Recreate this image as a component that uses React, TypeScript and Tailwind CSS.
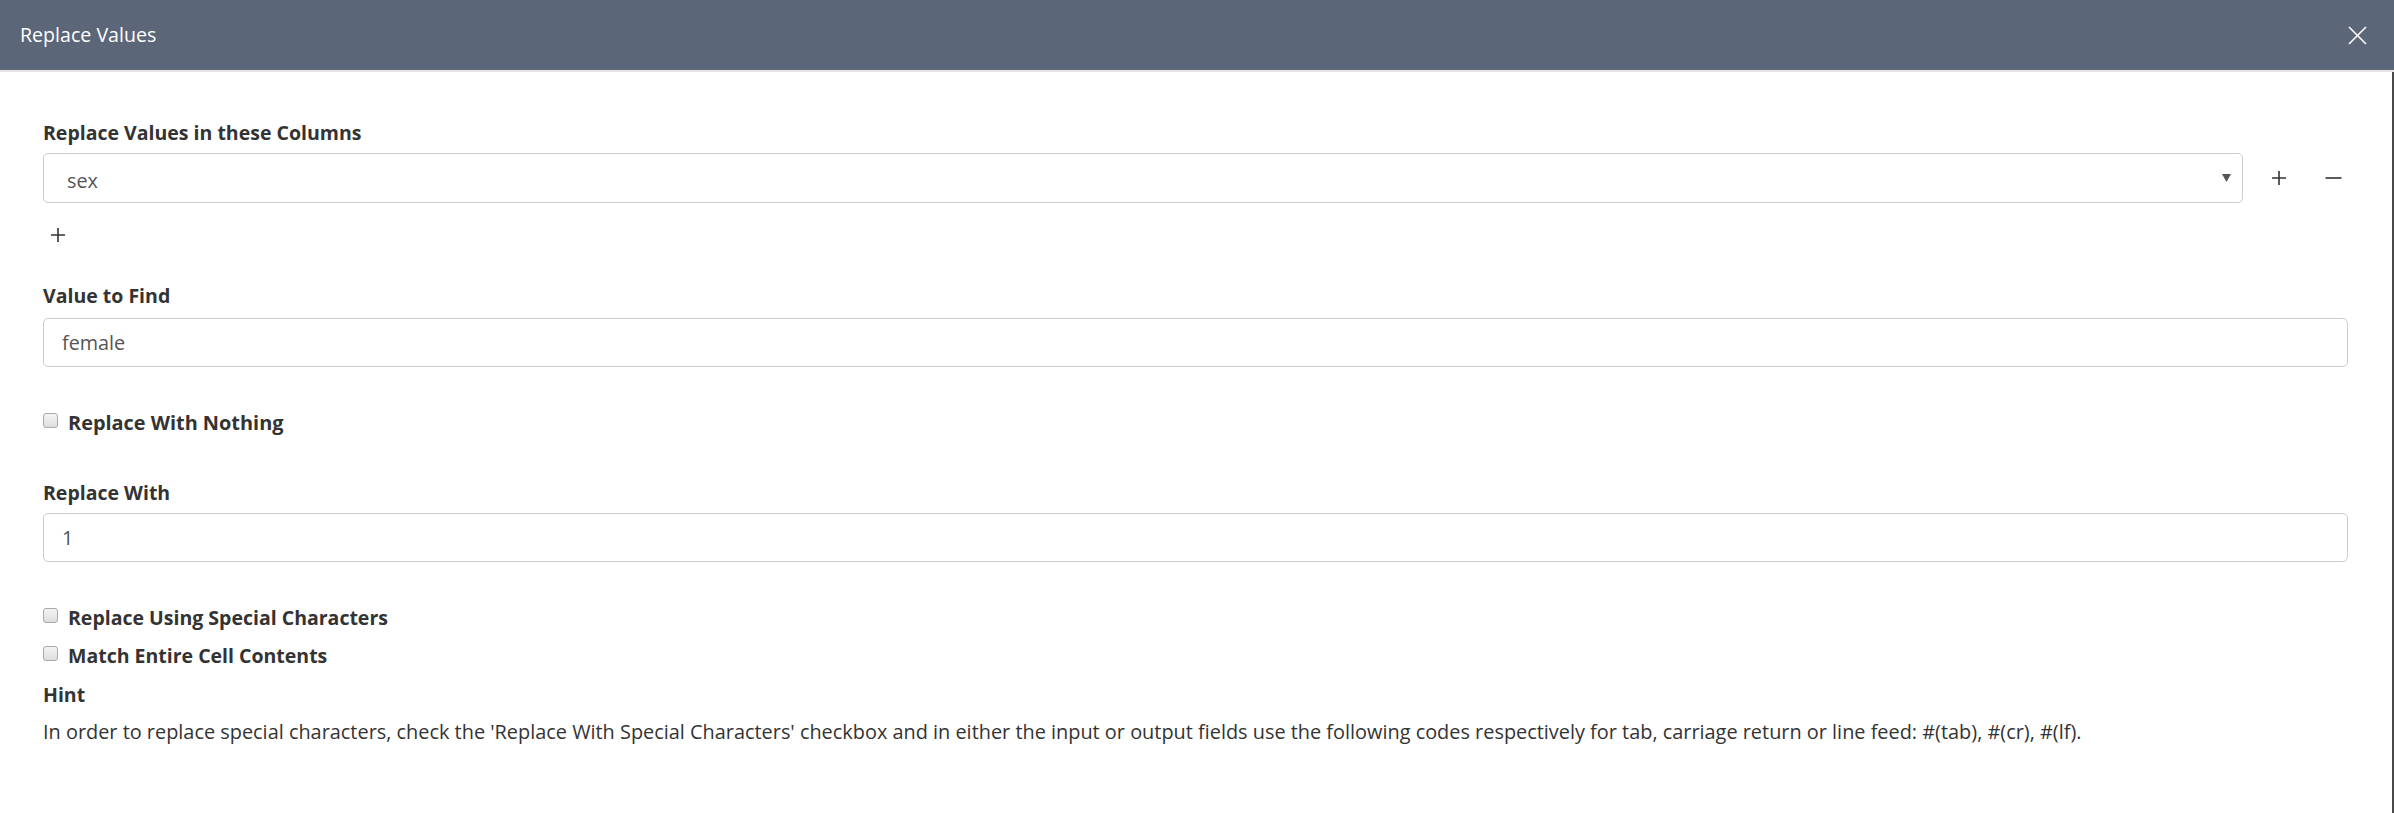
import React from "react";

const font = { fontFamily: '"Open Sans", "Noto Sans", sans-serif' };

function Checkbox() {
  return (
    <span className="mt-[5px] inline-block h-[15px] w-[15px] shrink-0 rounded-[3px] border border-[#a9a9a9] bg-gradient-to-b from-[#f4f4f4] to-[#dedede]" />
  );
}

function PlusIcon() {
  return (
    <svg width="16" height="16" viewBox="0 0 16 16" className="text-[#333]">
      <path d="M8 1v14M1 8h14" stroke="currentColor" strokeWidth="1.6" />
    </svg>
  );
}

function MinusIcon() {
  return (
    <svg width="17" height="16" viewBox="0 0 17 16" className="text-[#333]">
      <path d="M0.5 8h16" stroke="currentColor" strokeWidth="1.6" />
    </svg>
  );
}

export default function App() {
  return (
    <div className="flex h-[813px] w-full flex-col bg-white text-[#333]" style={font}>
      <div className="flex h-[70px] shrink-0 items-center justify-between bg-[#5b6778] pl-[20px] pr-[27px]">
        <span className="text-[19.6px] text-white">Replace Values</span>
        <svg width="19" height="19" viewBox="0 0 19 19">
          <path d="M1 1l17 17M18 1L1 18" stroke="white" strokeWidth="1.6" />
        </svg>
      </div>
      <div className="h-[2px] shrink-0 bg-[#e4e4e4]" />
      <div className="flex flex-1 flex-col border-r-2 border-[#4a4a4a] pl-[43px] pr-[44px] pt-[46px]">
        <div className="h-[30px] text-[19.5px] font-bold leading-[30px]">Replace Values in these Columns</div>
        <div className="mt-[5px] flex items-center">
          <div className="flex h-[50px] w-[2200px] items-center justify-between rounded-[5px] border-[1.5px] border-[#cccccc] pl-[23px] pr-[11px]">
            <span className="pt-[5px] text-[19.8px] text-[#555]">sex</span>
            <svg width="9" height="8" viewBox="0 0 9 8">
              <path d="M0 0h9L4.5 8z" fill="#555" />
            </svg>
          </div>
          <div className="ml-[28px] flex items-center gap-[38px]">
            <PlusIcon />
            <MinusIcon />
          </div>
        </div>
        <div className="mt-[17px] flex h-[30px] items-center pl-[7px]">
          <PlusIcon />
        </div>
        <div className="mt-[31px] h-[30px] text-[19.5px] font-bold leading-[30px]">Value to Find</div>
        <div className="mt-[7px] flex h-[49px] items-center rounded-[5px] border-[1.5px] border-[#cccccc] pl-[18px] text-[19.8px] text-[#555]">
          female
        </div>
        <div className="mt-[41px] flex h-[30px] items-start gap-[10px]">
          <Checkbox />
          <span className="text-[19.9px] font-bold leading-[30px]">Replace With Nothing</span>
        </div>
        <div className="mt-[40px] h-[30px] text-[19.5px] font-bold leading-[30px]">Replace With</div>
        <div className="mt-[5px] flex h-[49px] items-center rounded-[5px] border-[1.5px] border-[#cccccc] pl-[18px] text-[19.8px] text-[#555]">
          1
        </div>
        <div className="mt-[41px] flex h-[30px] items-start gap-[10px]">
          <Checkbox />
          <span className="text-[19.5px] font-bold leading-[30px]">Replace Using Special Characters</span>
        </div>
        <div className="mt-[7.5px] flex h-[30px] items-start gap-[10px]">
          <Checkbox />
          <span className="text-[19.5px] font-bold leading-[30px]">Match Entire Cell Contents</span>
        </div>
        <div className="mt-[9px] h-[30px] text-[19.5px] font-bold leading-[30px]">Hint</div>
        <div className="mt-[7.5px] text-[19.9px] leading-[30px]">
          In order to replace special characters, check the 'Replace With Special Characters' checkbox and in either the input or output fields use the following codes respectively for tab, carriage return or line feed: #(tab), #(cr), #(lf).
        </div>
      </div>
    </div>
  );
}
